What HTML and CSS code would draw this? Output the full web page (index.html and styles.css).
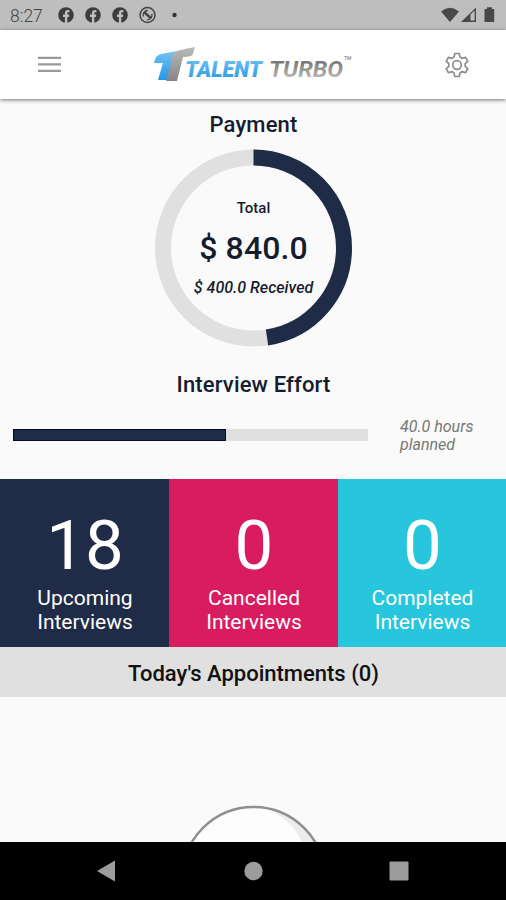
FILE: index.html
```html
<!DOCTYPE html>
<html lang="en">
<head>
	<meta charset="UTF-8">
	<title>Talent Turbo</title>
	<link rel="stylesheet" href="styles.css">
</head>
<body>
<div class="status">
	<span class="time">8:27</span>
	<svg class="status_left" width="130" height="20" viewBox="0 0 130 20">
		<defs>
			<g id="fb">
				<circle cx="8" cy="8" r="7.8" fill="#3c3c3c"/>
				<path d="M6.9 16V10H5V7.6h1.9V6.2c0-2 1.2-3.1 2.9-3.1h1.6v2.1h-1c-.9 0-1.1.5-1.1 1.1v1.3h2L10.9 10H9.3v6z" fill="#bebebe"/>
			</g>
		</defs>
		<use href="#fb" x="0" y="2"/>
		<use href="#fb" x="27" y="2"/>
		<use href="#fb" x="54" y="2"/>
		<g fill="none" stroke="#444">
			<circle cx="89.5" cy="10" r="7.5" stroke-width="1.5"/>
			<path d="M85.3 11.5a4.6 4.6 0 0 1 4.5-6M93.8 8.7a4.6 4.6 0 0 1-4.5 6" stroke-width="1.4"/>
			<path d="M86 7l7.2 6.4" stroke-width="2.4"/>
		</g>
		<circle cx="116.5" cy="10" r="2.2" fill="#333"/>
	</svg>
	<svg class="status_right" width="56" height="18" viewBox="0 0 56 18" fill="#484848">
		<path d="M0 5.5Q9 -1.8 18 5.5L9 16z"/>
		<path d="M20 16L35 1.5V16z"/>
		<path d="M29.5 8.6L33.6 4.6V14.5H29.5z" fill="#bebebe"/>
		<path d="M43.5 3H46V1.2h5V3h2.2v13h-9.7z"/>
	</svg>
</div>
<div class="header">
	<svg class="menu" width="23" height="17" viewBox="0 0 23 17" fill="#9a9a9a">
		<path d="M0 .7h23v2.2H0zM0 7.2h23v2.2H0zM0 13.7h23v2.2H0z"/>
	</svg>
	<svg class="logo" width="202" height="38" viewBox="0 0 202 38">
		<defs>
			<linearGradient id="blue" x1="0" y1="0" x2="0" y2="1">
				<stop offset="0" stop-color="#74c2f4"/>
				<stop offset="1" stop-color="#2398e6"/>
			</linearGradient>
			<linearGradient id="grey" x1="0" y1="0" x2="0" y2="1">
				<stop offset="0" stop-color="#bbb"/>
				<stop offset="1" stop-color="#858585"/>
			</linearGradient>
			<linearGradient id="silver" x1="0" y1="0" x2="0" y2="1">
				<stop offset=".2" stop-color="#777"/>
				<stop offset=".9" stop-color="#c2c2c2"/>
			</linearGradient>
		</defs>
		<path d="M2 17Q3 9 9 8L25 5 22 15 16 34H6l5-17z" fill="url(#blue)"/>
		<path d="M18 15Q20 6 28 4L43 1 41 8Q40 11 31 11L25 35H14l6-21z" fill="url(#grey)"/>
		<text class="logo_text" x="33" y="31" textLength="77" lengthAdjust="spacingAndGlyphs" fill="url(#blue)">TALENT</text>
		<text class="logo_text turbo" x="117" y="31" textLength="74" lengthAdjust="spacingAndGlyphs" fill="url(#silver)">TURBO</text>
		<text class="logo_tm" x="192" y="14">TM</text>
	</svg>
	<svg class="gear" width="24" height="26" viewBox="0 0 24 26" fill="none" stroke="#8c8c8c" stroke-width="1.7" stroke-linejoin="round">
		<path d="M9.8 1.5h4.4l.8 3.6 2.2 1.3 3.4-1.1 2.2 3.9-2.6 2.5v2.6l2.6 2.5-2.2 3.9-3.4-1.1-2.2 1.3-.8 3.6H9.8L9 20.9l-2.2-1.3-3.4 1.1-2.2-3.9 2.6-2.5v-2.6L1.2 9.2l2.2-3.9 3.4 1.1L9 5.1z"/>
		<circle cx="12" cy="13" r="4.3"/>
	</svg>
</div>
<div class="content">
	<h2 class="payment_title">Payment</h2>
	<div class="ring">
		<svg width="198" height="198" viewBox="0 0 198 198" fill="none" stroke-width="16">
			<circle cx="99.5" cy="99" r="90.5" stroke="#e0e0e0"/>
			<circle cx="99.5" cy="99" r="90.5" stroke="#202c47" pathLength="100" stroke-dasharray="47.6 100" transform="rotate(-90 99.5 99)"/>
		</svg>
		<div class="ring_text">
			<p class="total">Total</p>
			<p class="amount">$ 840.0</p>
			<p class="received">$ 400.0 Received</p>
		</div>
	</div>
	<h2 class="effort_title">Interview Effort</h2>
	<div class="effort">
		<div class="bar"><div class="bar_fill" style="width:60%"></div></div>
		<p class="planned">40.0 hours<br>planned</p>
	</div>
	<ul class="stats">
		<li class="upcoming"><b>18</b>Upcoming<br>Interviews</li>
		<li class="cancelled"><b>0</b>Cancelled<br>Interviews</li>
		<li class="completed"><b>0</b>Completed<br>Interviews</li>
	</ul>
	<h3 class="today">Today's Appointments (0)</h3>
	<div class="empty">
		<svg width="150" height="37" viewBox="0 0 150 37">
			<circle cx="75.5" cy="73.5" r="71.5" fill="#fdfdfd"/>
			<path d="M88 3Q113 14 124 37H139Q121 7 88 3z" fill="#eceeee"/>
			<circle cx="75.5" cy="73.5" r="71.5" fill="none" stroke="#8e8e8e" stroke-width="2.4"/>
		</svg>
	</div>
</div>
<div class="navbar">
	<svg width="506" height="58" viewBox="0 0 506 58" fill="#9c9c9c">
		<path d="M97 29L115 18.5v21z"/>
		<circle cx="253.5" cy="29" r="9.2"/>
		<rect x="389.5" y="19.5" width="19" height="19" rx="1"/>
	</svg>
</div>
</body>
</html>
```
FILE: styles.css
```css
*{margin:0;padding:0;box-sizing:border-box;}
body{width:506px;height:900px;overflow:hidden;display:flex;flex-direction:column;font-family:Roboto,"Liberation Sans",sans-serif;background:#fafafa;color:#161c30;}
ul,li{list-style:none;}
svg{display:block;}
.status{display:flex;align-items:center;height:30px;padding:0 9px 0 10px;background:#bebebe;}
.time{width:48px;font-size:17.5px;line-height:30px;font-weight:300;color:#444;padding-top:2px;}
.status_right{margin-left:auto;}
.header{display:flex;align-items:center;justify-content:space-between;height:69px;padding:0 37px 0 38px;background:#fff;box-shadow:0 1px 4px rgba(0,0,0,.55);}
.logo_text{font:italic 900 22px Roboto,sans-serif;}
.turbo{font-weight:700;}
.logo_tm{font:700 5px Roboto,sans-serif;fill:#999;}
.content{flex:1;display:flex;flex-direction:column;align-items:center;}
h2{font-size:22px;line-height:26px;font-weight:500;letter-spacing:.15px;padding-left:1px;}
.payment_title{margin-top:13px;}
.ring{display:grid;margin-top:11px;}
.ring svg,.ring_text{grid-area:1/1;}
.ring_text{text-align:center;padding:49px 0 0 1px;}
.total{font-size:15px;line-height:20px;font-weight:500;}
.amount{font-size:32px;line-height:38px;font-weight:500;margin-top:11px;letter-spacing:.1px;}
.received{font-size:16px;line-height:20px;font-weight:500;font-style:italic;margin-top:11px;}
.effort_title{margin-top:25px;}
.effort{display:flex;align-items:center;width:100%;height:81px;padding-left:13px;}
.bar{width:355px;height:12px;margin-top:-7px;background:#e0e0e0;}
.bar_fill{height:100%;background:#202c47;border:1px solid #060a32;}
.planned{margin:-6px 0 0 32px;font-size:16px;line-height:18px;font-style:italic;color:#777;}
.stats{display:grid;grid-template-columns:169px 169px 168px;width:100%;height:168px;}
.stats li{padding:27px 0 0 1px;text-align:center;color:#fff;font-size:21px;line-height:24px;}
.stats b{display:block;font-size:69px;line-height:80px;font-weight:400;}
.upcoming{background:#202c47;}
.cancelled{background:#d91b60;}
.completed{background:#28c6dc;}
.today{width:100%;height:50px;padding-left:1px;background:#e0e0e0;text-align:center;font-size:22px;line-height:53px;font-weight:500;color:#111;}
.empty{margin-top:auto;}
.navbar{height:58px;background:#000;}
```
